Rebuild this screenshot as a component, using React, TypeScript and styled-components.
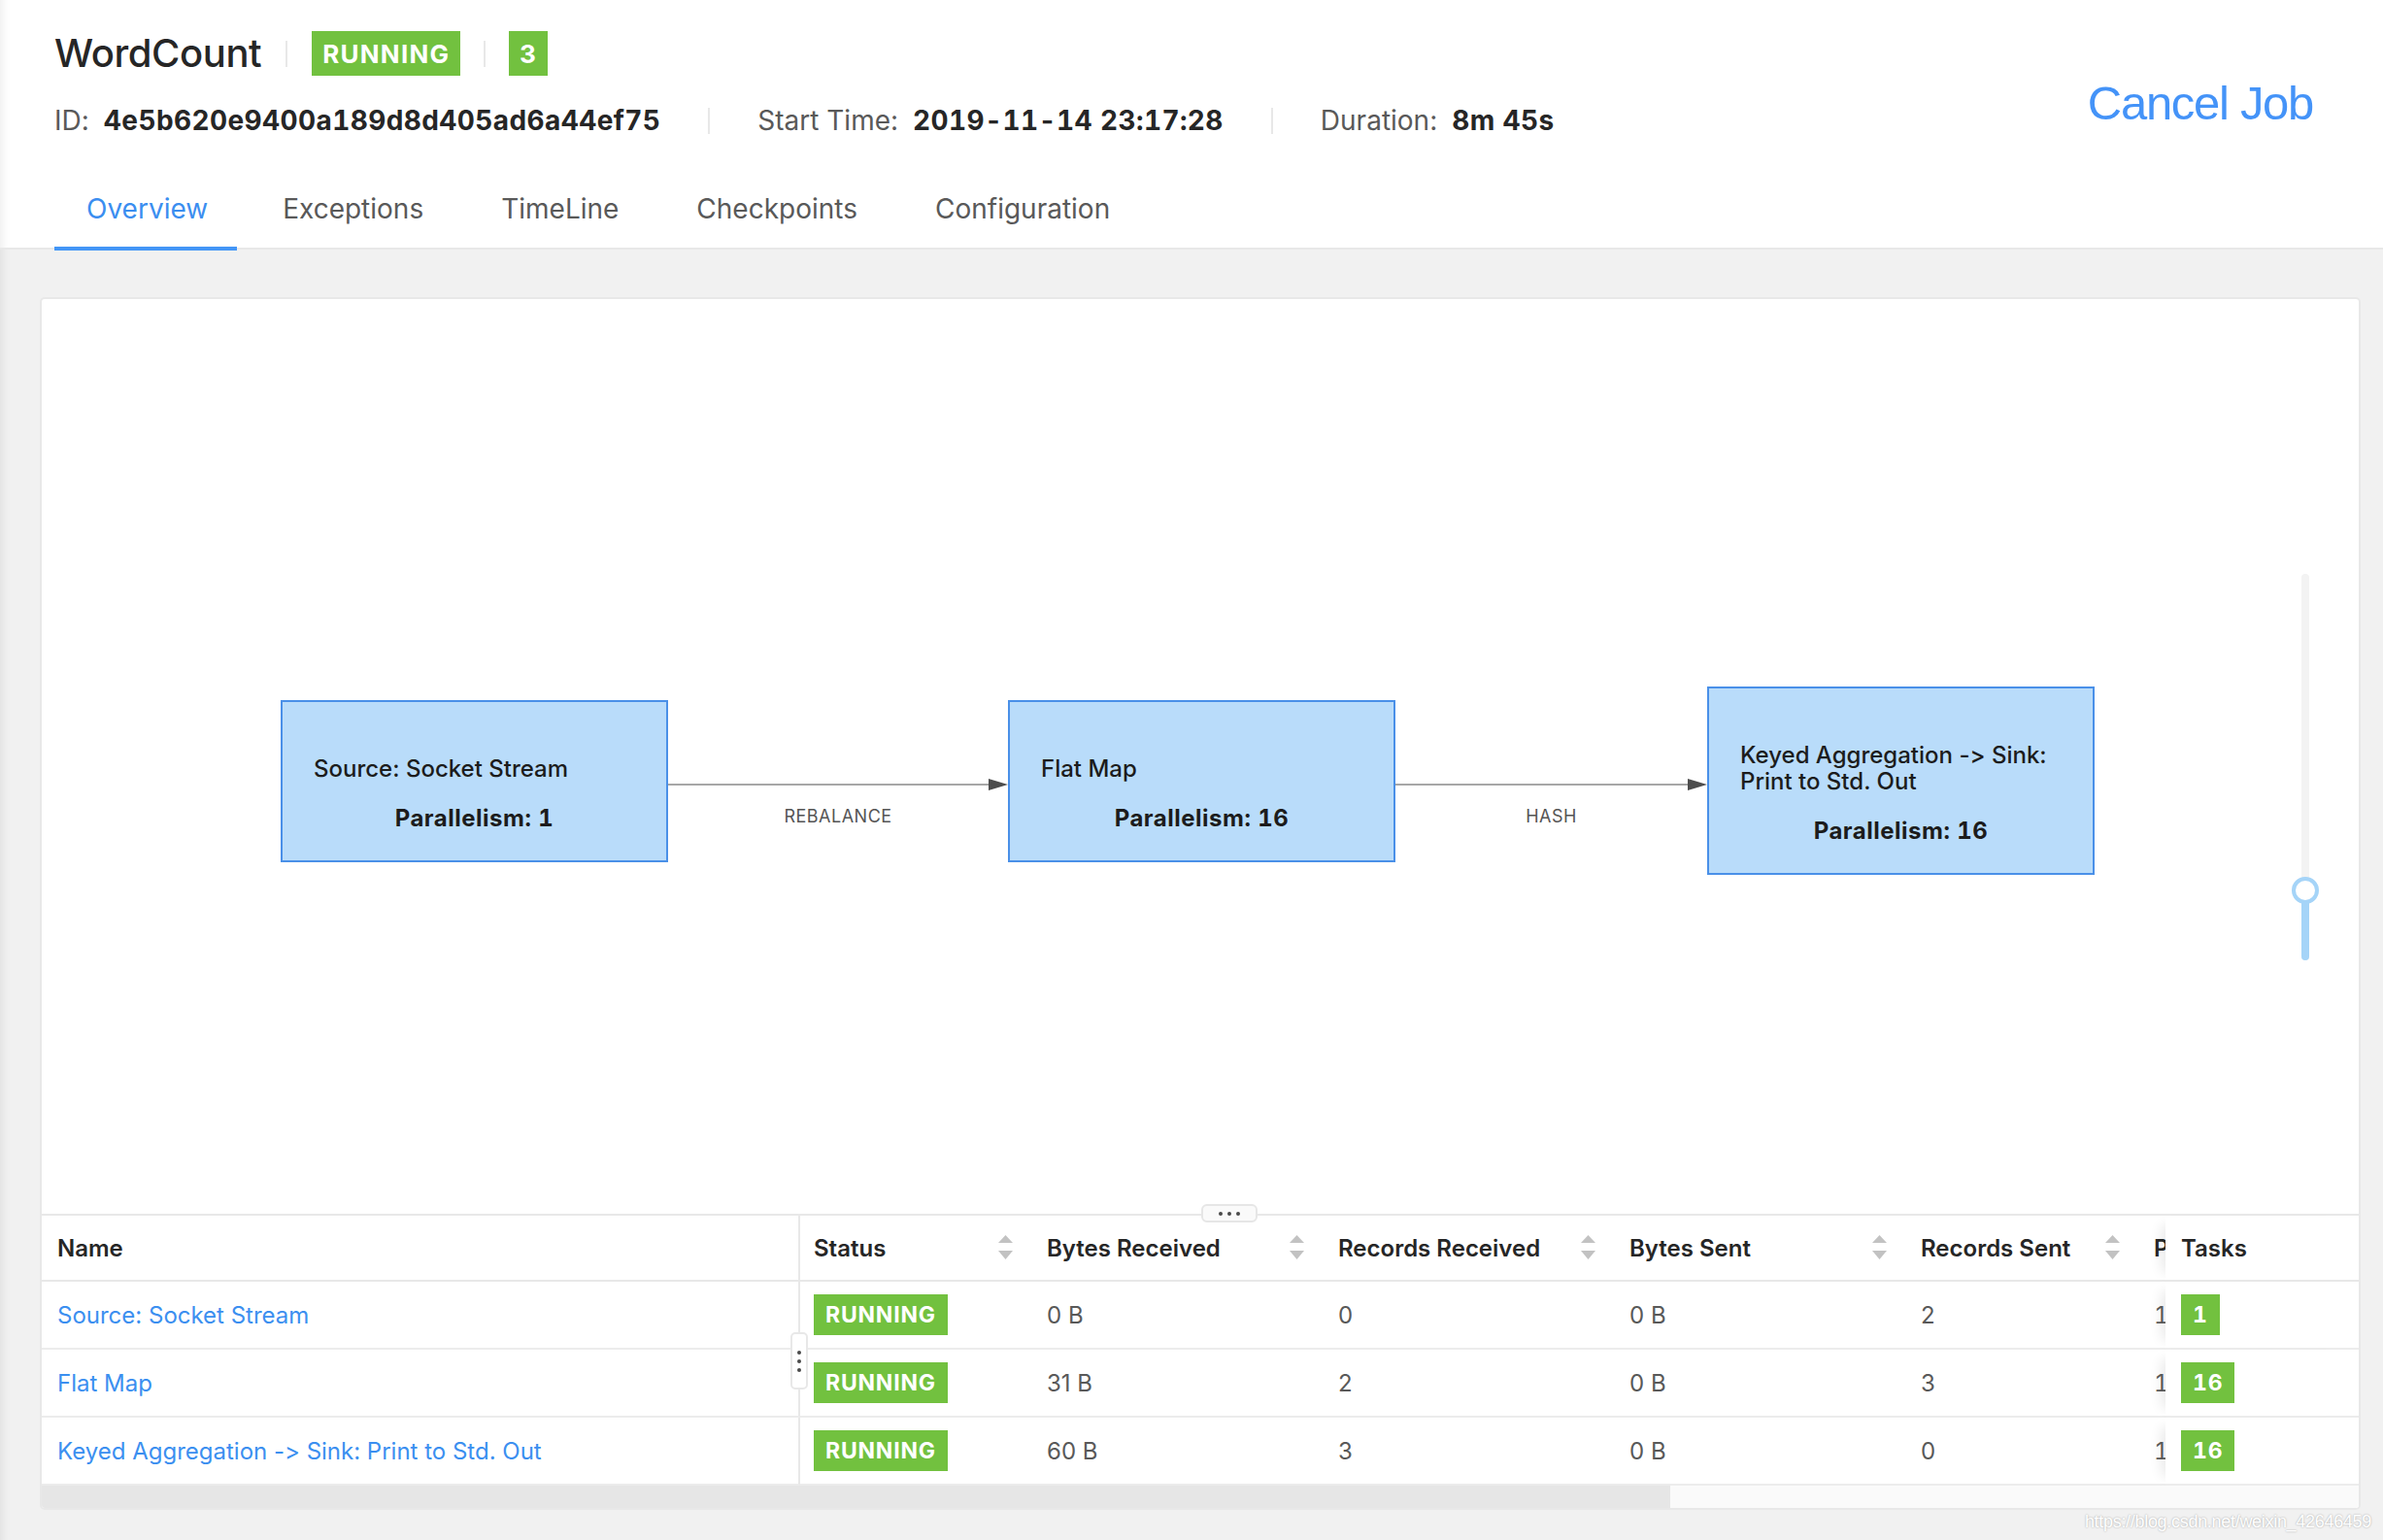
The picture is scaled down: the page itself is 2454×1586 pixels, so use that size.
import React from "react";
import styled, { createGlobalStyle } from "styled-components";

const GlobalStyle = createGlobalStyle`
  html, body {
    margin: 0;
    padding: 0;
  }
  body {
    background: #f1f1f1;
    font-family: Inter, "Noto Sans", "Liberation Sans", sans-serif;
    font-feature-settings: "calt" 0, "liga" 0;
    color: #262626;
  }
  * {
    box-sizing: border-box;
  }
`;

const Page = styled.div`
  position: relative;
  width: 2454px;
  height: 1586px;
  display: flex;
  flex-direction: column;
  background: #f1f1f1;
  overflow: hidden;
`;

/* ---------- header ---------- */

const Header = styled.header`
  background: #fff;
  border-bottom: 2px solid #e8e8e8;
  padding: 32px 72px 0 56px;
  box-shadow: inset 12px 0 10px -10px rgba(0, 0, 0, 0.08);
`;

const HeaderTop = styled.div`
  display: flex;
  justify-content: space-between;
  align-items: flex-start;
`;

const TitleBlock = styled.div`
  display: flex;
  flex-direction: column;
  gap: 28px;
`;

const TitleRow = styled.div`
  display: flex;
  align-items: center;
  height: 46px;
`;

const Title = styled.h1`
  margin: 0;
  font-size: 40px;
  font-weight: 500;
  line-height: 46px;
  color: #262626;
  letter-spacing: -0.4px;
`;

const Divider = styled.span<{ $h: number; $gap: number }>`
  display: inline-block;
  width: 2px;
  height: ${(p) => p.$h}px;
  background: #e8e8e8;
  margin: 0 ${(p) => p.$gap}px;
`;

const Tag = styled.span<{ $big?: boolean }>`
  display: inline-flex;
  align-items: center;
  justify-content: center;
  height: ${(p) => (p.$big ? 46 : 42)}px;
  padding: 0 ${(p) => (p.$big ? 11 : 12)}px;
  background: #72c13f;
  color: #fff;
  font-size: ${(p) => (p.$big ? 26 : 23)}px;
  font-weight: 700;
  letter-spacing: ${(p) => (p.$big ? 1.2 : 0.8)}px;
  font-variant-numeric: tabular-nums;
`;

const MetaRow = styled.div`
  display: flex;
  align-items: center;
  height: 36px;
  font-size: 28px;
`;

const MetaLabel = styled.span`
  color: #595959;
  margin-right: 15px;
`;

const MetaValue = styled.span`
  font-weight: 700;
  color: #262626;
  letter-spacing: 0.4px;
  font-variant-numeric: tabular-nums;
`;

const CancelLink = styled.a`
  margin-top: 46px;
  font-family: "Liberation Sans", Arial, sans-serif;
  font-size: 49px;
  line-height: 56px;
  letter-spacing: -1.3px;
  color: #4493f8;
  cursor: pointer;
`;

const TabBar = styled.nav`
  display: flex;
  gap: 14px;
  margin-top: 34px;
  margin-bottom: -3px;
`;

const Tab = styled.div<{ $active?: boolean }>`
  padding: 0 33px;
  height: 82px;
  line-height: 78px;
  font-size: 28px;
  color: ${(p) => (p.$active ? "#3b8ef0" : "#595959")};
  border-bottom: 4px solid ${(p) => (p.$active ? "#4396f6" : "transparent")};
  cursor: pointer;

  &:first-child {
    padding-right: 30px;
  }
`;

/* ---------- main card ---------- */

const Main = styled.main`
  flex: 1;
  display: flex;
  padding: 49px 23px 31px 41px;
  box-shadow: inset 12px 0 10px -10px rgba(0, 0, 0, 0.08);
`;

const Card = styled.section`
  flex: 1;
  display: flex;
  flex-direction: column;
  background: #fff;
  border: 2px solid #e8e8e8;
  border-radius: 5px;
  overflow: hidden;
`;

const Canvas = styled.div`
  position: relative;
  flex: 1;
  display: flex;
  align-items: center;
  padding: 50px 0 0 246px;
`;

const Node = styled.div`
  width: 399px;
  flex-shrink: 0;
  background: #b9dcfa;
  border: 2px solid #4a90e8;
  padding: 55px 32px 30px;
  font-size: 24px;
  line-height: 27px;
  color: #1c1c1c;
`;

const NodeName = styled.div`
  font-weight: 500;
`;

const NodeParallelism = styled.div`
  margin-top: 24px;
  text-align: center;
  font-weight: 700;
  letter-spacing: 0.5px;
  font-variant-numeric: tabular-nums;
`;

const Edge = styled.div<{ $w: number }>`
  width: ${(p) => p.$w}px;
  flex-shrink: 0;
  align-self: stretch;
  display: grid;
  grid-template-rows: 1fr 14px 1fr;
`;

const EdgeLine = styled.svg`
  grid-row: 2;
  display: block;
  width: 100%;
  height: 14px;
  margin-top: 4px;
`;

const EdgeLabel = styled.div`
  grid-row: 3;
  padding-top: 19px;
  text-align: center;
  font-size: 18px;
  color: #555;
  letter-spacing: 0.5px;
`;

const Slider = styled.div`
  position: absolute;
  right: 51px;
  top: 283px;
  width: 8px;
  height: 398px;
  border-radius: 4px;
  background: #f3f3f3;
`;

const SliderFill = styled.div`
  position: absolute;
  left: 0;
  right: 0;
  bottom: 0;
  height: 80px;
  border-radius: 4px;
  background: #a5d4f8;
`;

const SliderHandle = styled.div`
  position: absolute;
  left: -10px;
  top: 312px;
  width: 28px;
  height: 28px;
  border-radius: 50%;
  border: 4px solid #a5d4f8;
  background: #fff;
`;

/* ---------- table ---------- */

const TablePane = styled.div`
  position: relative;
  border-top: 2px solid #e8e8e8;
`;

const Table = styled.table`
  width: 100%;
  table-layout: fixed;
  border-collapse: separate;
  border-spacing: 0;
  font-size: 24px;
`;

const Th = styled.th<{ $first?: boolean; $fixed?: boolean }>`
  height: 68px;
  padding: 0 16px;
  text-align: left;
  font-weight: 600;
  color: #262626;
  background: #fff;
  border-bottom: 2px solid #e8e8e8;
  border-right: ${(p) => (p.$first ? "2px solid #e8e8e8" : "none")};
  white-space: nowrap;
  ${(p) => (p.$fixed ? "box-shadow: -14px 0 12px -10px rgba(0,0,0,0.09);" : "")}
`;

const Td = styled.td<{ $first?: boolean; $fixed?: boolean }>`
  height: 70px;
  padding: 0 16px;
  color: #595959;
  background: #fff;
  border-bottom: 2px solid #ececec;
  border-right: ${(p) => (p.$first ? "2px solid #e8e8e8" : "none")};
  white-space: nowrap;
  ${(p) => (p.$fixed ? "box-shadow: -14px 0 12px -10px rgba(0,0,0,0.09);" : "")}
`;

const ClipCell = styled.div`
  overflow: hidden;
  white-space: nowrap;
  font-variant-numeric: tabular-nums;
`;

const HeadInner = styled.div`
  display: flex;
  align-items: center;
  justify-content: space-between;
  padding-right: 3px;
`;

const NameLink = styled.a`
  color: #3b8ff0;
  cursor: pointer;
`;

const ScrollBar = styled.div`
  height: 23px;
  background: #fafafa;
`;

const ScrollThumb = styled.div`
  width: 1677px;
  height: 100%;
  background: #e6e6e6;
`;

const ExpandHandle = styled.div`
  position: absolute;
  left: 1194px;
  top: -12px;
  width: 58px;
  height: 19px;
  display: flex;
  align-items: center;
  justify-content: center;
  gap: 5px;
  background: #fafafa;
  border: 2px solid #e6e6e6;
  border-radius: 6px;
`;

const ResizeHandle = styled.div`
  position: absolute;
  left: 771px;
  top: 120px;
  width: 18px;
  height: 59px;
  display: flex;
  flex-direction: column;
  align-items: center;
  justify-content: center;
  gap: 5px;
  background: #fff;
  border: 2px solid #e8e8e8;
  border-radius: 5px;
`;

const Dot = styled.span`
  width: 4px;
  height: 4px;
  border-radius: 50%;
  background: #4a4a4a;
`;

const Watermark = styled.div`
  position: absolute;
  right: 12px;
  bottom: 8px;
  font-family: "Liberation Sans", Arial, sans-serif;
  font-size: 18px;
  letter-spacing: -0.3px;
  color: #fff;
  text-shadow: 0 0 2px rgba(0, 0, 0, 0.35);
`;

function SortIcon() {
  return (
    <svg width="15" height="26" viewBox="0 0 15 26">
      <path d="M7.5 0 L15 8 H0 Z" fill="#c2c2c2" />
      <path d="M0 16 H15 L7.5 25 Z" fill="#c2c2c2" />
    </svg>
  );
}

function EdgeArrow({ width, label }: { width: number; label: string }) {
  return (
    <Edge $w={width}>
      <EdgeLine viewBox={`0 0 ${width} 14`}>
        <line x1="0" y1="7" x2={width - 16} y2="7" stroke="#8a8a8a" strokeWidth="1.6" />
        <path d={`M${width - 20} 1 L${width} 7 L${width - 20} 13 Z`} fill="#4d4d4d" />
      </EdgeLine>
      <EdgeLabel>{label}</EdgeLabel>
    </Edge>
  );
}

const vertices = [
  { name: "Source: Socket Stream", bytesIn: "0 B", recIn: "0", bytesOut: "0 B", recOut: "2", tasks: "1" },
  { name: "Flat Map", bytesIn: "31 B", recIn: "2", bytesOut: "0 B", recOut: "3", tasks: "16" },
  { name: "Keyed Aggregation -> Sink: Print to Std. Out", bytesIn: "60 B", recIn: "3", bytesOut: "0 B", recOut: "0", tasks: "16" },
];

const sortable = ["Status", "Bytes Received", "Records Received", "Bytes Sent", "Records Sent"];

export default function App() {
  return (
    <Page>
      <GlobalStyle />
      <Header>
        <HeaderTop>
          <TitleBlock>
            <TitleRow>
              <Title>WordCount</Title>
              <Divider $h={27} $gap={25} />
              <Tag $big>RUNNING</Tag>
              <Divider $h={27} $gap={24} />
              <Tag $big>3</Tag>
            </TitleRow>
            <MetaRow>
              <MetaLabel>ID:</MetaLabel>
              <MetaValue>4e5b620e9400a189d8d405ad6a44ef75</MetaValue>
              <Divider $h={27} $gap={49} />
              <MetaLabel>Start Time:</MetaLabel>
              <MetaValue>2019-11-14 23:17:28</MetaValue>
              <Divider $h={27} $gap={49} />
              <MetaLabel>Duration:</MetaLabel>
              <MetaValue>8m 45s</MetaValue>
            </MetaRow>
          </TitleBlock>
          <CancelLink>Cancel Job</CancelLink>
        </HeaderTop>
        <TabBar>
          <Tab $active>Overview</Tab>
          <Tab>Exceptions</Tab>
          <Tab>TimeLine</Tab>
          <Tab>Checkpoints</Tab>
          <Tab>Configuration</Tab>
        </TabBar>
      </Header>

      <Main>
        <Card>
          <Canvas>
            <Node>
              <NodeName>Source: Socket Stream</NodeName>
              <NodeParallelism>Parallelism: 1</NodeParallelism>
            </Node>
            <EdgeArrow width={350} label="REBALANCE" />
            <Node>
              <NodeName>Flat Map</NodeName>
              <NodeParallelism>Parallelism: 16</NodeParallelism>
            </Node>
            <EdgeArrow width={321} label="HASH" />
            <Node>
              <NodeName>Keyed Aggregation -&gt; Sink: Print to Std. Out</NodeName>
              <NodeParallelism>Parallelism: 16</NodeParallelism>
            </Node>
            <Slider>
              <SliderFill />
              <SliderHandle />
            </Slider>
          </Canvas>

          <TablePane>
            <Table>
              <colgroup>
                <col style={{ width: 781 }} />
                <col style={{ width: 238 }} />
                <col style={{ width: 300 }} />
                <col style={{ width: 300 }} />
                <col style={{ width: 300 }} />
                <col style={{ width: 240 }} />
                <col style={{ width: 28 }} />
                <col style={{ width: 199 }} />
              </colgroup>
              <thead>
                <tr>
                  <Th $first>Name</Th>
                  {sortable.map((h, i) => (
                    <Th key={h} style={i === 0 ? { paddingLeft: 14 } : undefined}>
                      <HeadInner>
                        <span>{h}</span>
                        <SortIcon />
                      </HeadInner>
                    </Th>
                  ))}
                  <Th style={{ paddingRight: 0 }}>
                    <ClipCell>Parallelism</ClipCell>
                  </Th>
                  <Th $fixed>Tasks</Th>
                </tr>
              </thead>
              <tbody>
                {vertices.map((v) => (
                  <tr key={v.name}>
                    <Td $first>
                      <NameLink>{v.name}</NameLink>
                    </Td>
                    <Td style={{ paddingLeft: 14 }}>
                      <Tag>RUNNING</Tag>
                    </Td>
                    <Td>{v.bytesIn}</Td>
                    <Td>{v.recIn}</Td>
                    <Td>{v.bytesOut}</Td>
                    <Td>{v.recOut}</Td>
                    <Td style={{ paddingRight: 0 }}>
                      <ClipCell>{v.tasks}</ClipCell>
                    </Td>
                    <Td $fixed>
                      <Tag>{v.tasks}</Tag>
                    </Td>
                  </tr>
                ))}
              </tbody>
            </Table>
            <ScrollBar>
              <ScrollThumb />
            </ScrollBar>
            <ExpandHandle>
              <Dot />
              <Dot />
              <Dot />
            </ExpandHandle>
            <ResizeHandle>
              <Dot />
              <Dot />
              <Dot />
            </ResizeHandle>
          </TablePane>
        </Card>
      </Main>
      <Watermark>https://blog.csdn.net/weixin_42646459</Watermark>
    </Page>
  );
}
